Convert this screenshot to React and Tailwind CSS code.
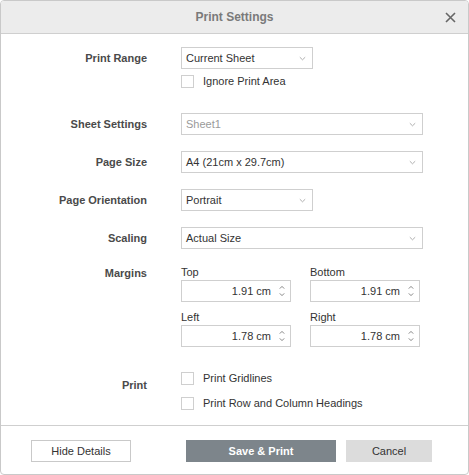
import React from 'react';

const Chevron = () => (
  <svg width="7" height="5" viewBox="0 0 7 5" className="shrink-0">
    <path d="M0.8 1.2l2.7 2.6 2.7-2.6" fill="none" stroke="#9a9a9a" strokeWidth="0.8" />
  </svg>
);

const Select = ({ value, wide, disabled }) => (
  <div
    className={`flex items-center justify-between h-[22px] border border-[#cfcfcf] bg-white pl-[4px] pr-[6px] ${
      wide ? 'w-[242px]' : 'w-[132px]'
    }`}
  >
    <span className={disabled ? 'text-[#9a9a9a]' : 'text-[#333]'}>{value}</span>
    <Chevron />
  </div>
);

const Checkbox = ({ label }) => (
  <div className="flex items-center h-[13px]">
    <div className="w-[13px] h-[13px] border border-[#cfcfcf] bg-white" />
    <span className="ml-[9px] text-[#333]">{label}</span>
  </div>
);

const Spinner = ({ label, value }) => (
  <div className="flex flex-col">
    <div className="h-[14px] leading-[14px] text-[#333]">{label}</div>
    <div className="mt-[1px] flex items-center justify-end h-[22px] w-[110px] border border-[#cfcfcf] bg-white pr-[5px]">
      <span className="text-[#333]">{value}</span>
      <svg width="6" height="14" viewBox="0 0 6 14" className="ml-[8px]">
        <path d="M0.8 4.6l2.2-2.2 2.2 2.2" fill="none" stroke="#777" strokeWidth="0.9" />
        <path d="M0.8 9.4l2.2 2.2 2.2-2.2" fill="none" stroke="#777" strokeWidth="0.9" />
      </svg>
    </div>
  </div>
);

const Label = ({ children, className = '' }) => (
  <div className={`w-[146px] shrink-0 mr-[34px] text-right font-bold text-[#4a4a4a] ${className}`}>{children}</div>
);

export default function App() {
  return (
    <div
      className="w-[469px] h-[475px] flex flex-col bg-white border border-[#c9c9c9] rounded-[4px] overflow-hidden text-[11px] leading-[13px]"
      style={{ fontFamily: '"Liberation Sans", Arial, sans-serif' }}
    >
      {/* header */}
      <div className="relative h-[33px] shrink-0 flex items-center justify-center bg-[#ececec] border-b border-[#cfcfcf]">
        <span className="text-[12px] font-bold text-[#7a7a7a]">Print Settings</span>
        <svg className="absolute right-[12px] top-[11px]" width="11" height="11" viewBox="0 0 11 11">
          <path d="M1 1l9 9M10 1l-9 9" stroke="#666" strokeWidth="1.6" />
        </svg>
      </div>

      {/* body */}
      <div className="flex-1 pt-[13px]">
        <div className="flex">
          <Label className="leading-[22px]">Print Range</Label>
          <div className="flex flex-col">
            <Select value="Current Sheet" />
            <div className="mt-[6px]">
              <Checkbox label="Ignore Print Area" />
            </div>
          </div>
        </div>

        <div className="mt-[25px] flex flex-col gap-[16px]">
          <div className="flex items-center">
            <Label>Sheet Settings</Label>
            <Select value="Sheet1" wide disabled />
          </div>
          <div className="flex items-center">
            <Label>Page Size</Label>
            <Select value="A4 (21cm x 29.7cm)" wide />
          </div>
          <div className="flex items-center">
            <Label>Page Orientation</Label>
            <Select value="Portrait" />
          </div>
          <div className="flex items-center">
            <Label>Scaling</Label>
            <Select value="Actual Size" wide />
          </div>
        </div>

        <div className="mt-[16px] flex">
          <Label className="pt-[2px]">Margins</Label>
          <div className="grid grid-cols-[110px_110px] gap-x-[19px] gap-y-[8px]">
            <Spinner label="Top" value="1.91 cm" />
            <Spinner label="Bottom" value="1.91 cm" />
            <Spinner label="Left" value="1.78 cm" />
            <Spinner label="Right" value="1.78 cm" />
          </div>
        </div>

        <div className="mt-[25px] flex">
          <Label className="pt-[7px]">Print</Label>
          <div className="flex flex-col gap-[12px]">
            <Checkbox label="Print Gridlines" />
            <Checkbox label="Print Row and Column Headings" />
          </div>
        </div>
      </div>

      {/* footer */}
      <div className="h-[49px] shrink-0 border-t border-[#cfcfcf] flex items-start pt-[14px] pl-[30px]">
        <button className="w-[100px] h-[22px] border border-[#c9c9c9] bg-white text-[#333]">Hide Details</button>
        <button className="ml-[55px] w-[150px] h-[22px] bg-[#7d858b] text-white font-bold">Save &amp; Print</button>
        <button className="ml-[10px] w-[86px] h-[22px] bg-[#dcdcdc] text-[#333]">Cancel</button>
      </div>
    </div>
  );
}
